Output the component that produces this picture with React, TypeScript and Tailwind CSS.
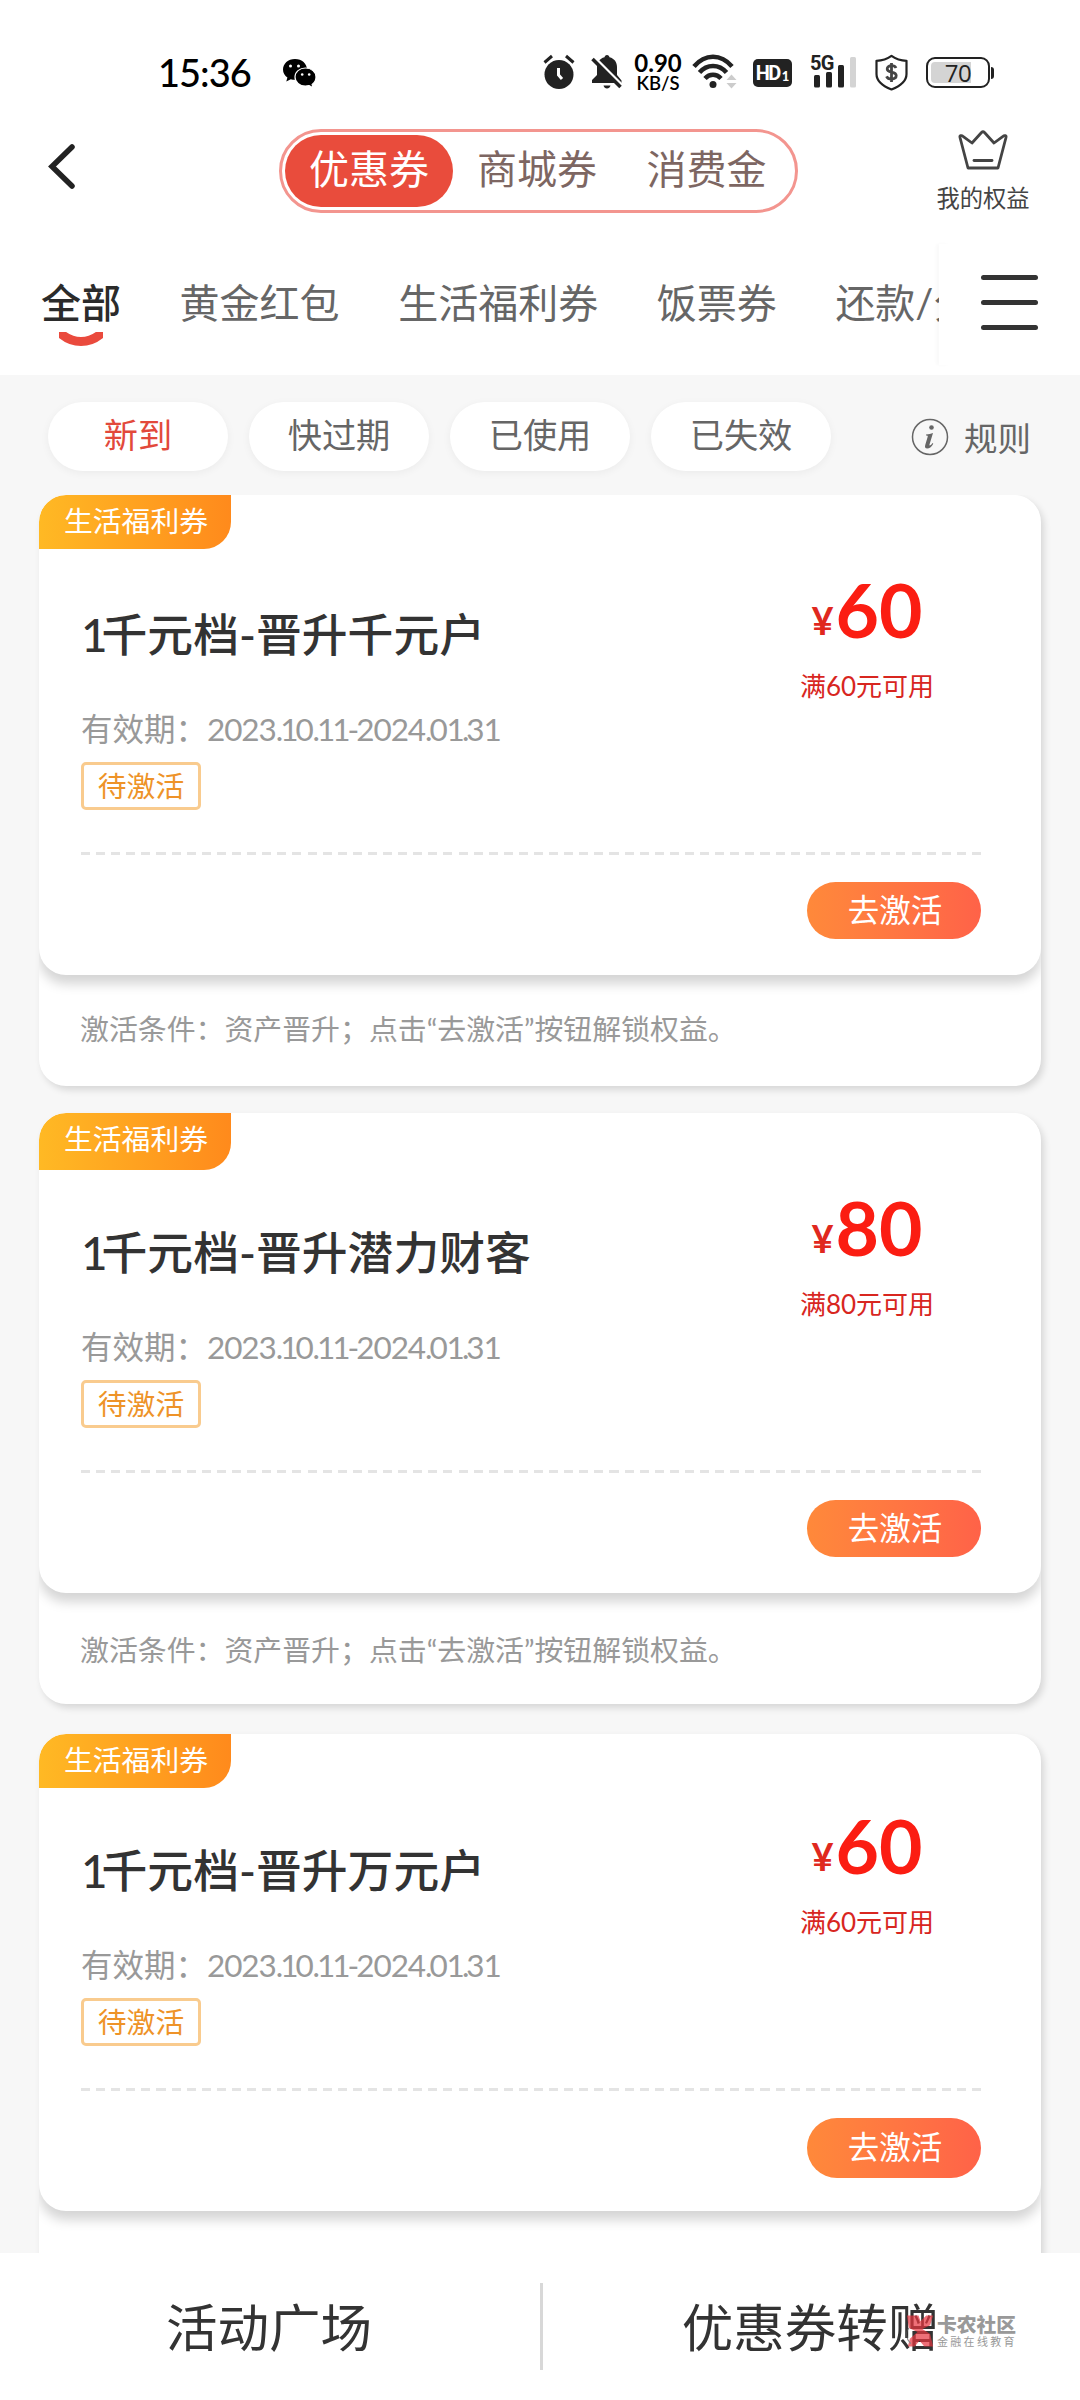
import React, { useState } from 'react';

interface Coupon {
  id: number;
  title: string;
  amount: number;
  margin: string;
  height: string;
  top: string;
  badge: string;
  button: string;
  note: string;
}

const COUPONS: Coupon[] = [
  { id: 1, title: '千元档-晋升千元户', amount: 60, margin: '', height: 'h-[480px]', top: 'h-[57px]', badge: 'h-[54px]', button: 'h-[57px]', note: 'pb-[4px]' },
  { id: 2, title: '千元档-晋升潜力财客', amount: 80, margin: '', height: 'h-[480px]', top: 'h-[57px]', badge: 'h-[57px]', button: 'h-[57px]', note: 'pt-[3px]' },
  { id: 3, title: '千元档-晋升万元户', amount: 60, margin: 'mt-[3px]', height: 'h-[477px]', top: 'h-[54px]', badge: 'h-[54px]', button: 'h-[60px]', note: 'pt-[6px]' },
];

const SEGMENTS = ['优惠券', '商城券', '消费金'];
const CATEGORIES = ['全部', '黄金红包', '生活福利券', '饭票券', '还款/分期券'];
const FILTERS = ['新到', '快过期', '已使用', '已失效'];

function StatusBar() {
  return (
    <div className="flex h-[108px] items-start pl-[158px] pt-[54px] text-black">
      <span className="mt-[-5px] w-[125px] text-[38px] font-medium leading-[46px] tracking-[-1px]">15:36</span>
      <svg className="mt-[5px] h-[29px] w-[33px]" viewBox="0 0 33 29">
        <path d="M12 0C5 0 0 4.700 0 10.500c0 3.300 1.700 6.200 4.400 8.100L3.300 22.500l4.500-2.300c1.300.4 2.700.6 4.200.6 7 0 12-4.600 12-10.300S19 0 12 0Z" fill="#000" />
        <path d="M22.500 9C16.500 9 12 13 12 18s4.500 9.100 10.500 9.100c1.300 0 2.500-.2 3.600-.5l4 2.200-1-3.400c2.400-1.700 3.900-4.400 3.900-7.400 0-5-4.500-9-10.500-9Z" fill="#000" stroke="#fff" strokeWidth="1.200" />
        <circle cx="7.500" cy="7" r="1.500" fill="#fff" />
        <circle cx="15.500" cy="7" r="1.500" fill="#fff" />
        <circle cx="19.200" cy="15.500" r="1.300" fill="#fff" />
        <circle cx="26.200" cy="15.500" r="1.300" fill="#fff" />
      </svg>

      {/* alarm */}
      <svg className="ml-[227px] h-[36px] w-[32px]" viewBox="0 0 32 36">
        <circle cx="16" cy="20.500" r="14.500" fill="#222" />
        <path d="M1.500 8.500 9 2M30.500 8.500 23 2" stroke="#222" strokeWidth="3" />
        <path d="M15.500 14v7l3.500 4" fill="none" stroke="#fff" strokeWidth="3" />
      </svg>
      {/* muted bell */}
      <svg className="ml-[16px] h-[36px] w-[32px]" viewBox="0 0 32 36">
        <path d="M16 1c1.500 0 2.300 1 2.500 2.300C23.500 4.500 26 8.500 26 13v8l4.500 5.500V29H1v-3l5-5v-8c0-4.500 2.500-8.500 7.500-9.700C13.700 2 14.500 1 16 1Z" fill="#222" />
        <path d="M12.500 31.500h7c-.5 2-1.800 3-3.500 3s-3-1-3.500-3Z" fill="#222" />
        <path d="m3 3 29 29" stroke="#fff" strokeWidth="3" />
        <path d="m1.500 5 28 28" stroke="#222" strokeWidth="3.500" />
      </svg>
      <div className="ml-[9px] mt-[-2px] flex w-[52px] flex-col items-center">
        <span className="text-[24px] font-bold leading-[22px]">0.90</span>
        <span className="text-[18.500px] font-semibold leading-[19px]">KB/S</span>
      </div>
      {/* wifi */}
      <svg className="ml-[8px] h-[36px] w-[46px]" viewBox="0 0 46 36">
        <g fill="none" stroke="#222" strokeWidth="4.500">
          <path d="M2 12.500C13-.5 29-.5 40 12.500" />
          <path d="M7.500 18.500c7.500-8.700 19.500-8.700 27 0" />
          <path d="M13 24.500c4.500-5 11.500-5 16 0" />
        </g>
        <circle cx="21" cy="30.500" r="3.500" fill="#222" />
        <path d="m39.500 20.500 5 5.500h-10ZM39.500 34.500l5-5.500h-10Z" fill="#ccc" />
      </svg>
      <div className="ml-[15px] mt-[5px] flex h-[28px] w-[39px] items-center justify-center rounded-[5px] bg-[#222] text-white">
        <span className="font-[Roboto] text-[20px] font-bold leading-none tracking-[-1.500px]">HD</span>
        <span className="ml-[2px] mt-[7px] text-[13px] font-black leading-none">1</span>
      </div>
      <div className="relative ml-[18px] h-[36px] w-[48px]">
        <svg className="h-full w-full" viewBox="0 0 48 36">
          <g fill="#222">
            <rect x="4" y="21" width="6" height="12.500" rx="1.500" />
            <rect x="16" y="18" width="6" height="15.500" rx="1.500" />
            <rect x="28" y="11" width="6" height="22.500" rx="1.500" />
          </g>
          <rect x="40" y="3" width="6" height="30.500" rx="1.500" fill="#d4d4d4" />
        </svg>
        <span className="absolute left-0 top-0 font-[Roboto] text-[20px] font-bold leading-[18px] tracking-[-0.800px] text-[#222]">5G</span>
      </div>
      {/* shield */}
      <svg className="ml-[16px] h-[37px] w-[35px]" viewBox="0 0 35 37">
        <path d="M17.500 1.800c4 2.800 9 4.700 15 5V20c0 7-6 12-15 15.500C8.500 32 2.500 27 2.500 20V6.800c6-.3 11-2.200 15-5Z" fill="none" stroke="#222" strokeWidth="2.200" strokeLinejoin="round" />
        <path d="M22 14c-.8-1.700-2.300-2.300-4.500-2.300-2.500 0-4.300 1.200-4.300 3.200 0 4.500 9 1.900 9 6.700 0 2.300-2 3.400-4.700 3.400-2.400 0-4.200-1-5-2.700M17.500 9v19" fill="none" stroke="#444" strokeWidth="2.800" />
      </svg>
      <div className="ml-[17px] mt-[3px] flex items-center">
        <div className="flex h-[31px] w-[64px] items-center justify-center rounded-[9px] border-2 border-[#222] bg-[linear-gradient(90deg,#d4d4d4_72%,#fff_72%)] bg-clip-content p-[3px] font-[Open_Sans] text-[24px] leading-none tracking-[-0.500px] text-[#222]">
          70
        </div>
        <div className="ml-px h-[12px] w-[3px] rounded-r-sm bg-[#222]" />
      </div>
    </div>
  );
}

function CouponCard({ coupon }: { coupon: Coupon }) {
  return (
    <div className={`shrink-0 overflow-hidden rounded-[27px] bg-white shadow-[3px_4px_7px_rgba(0,0,0,0.13)] ${coupon.margin}`}>
      <div className={`flex flex-col items-start rounded-[27px] bg-white shadow-[0_9px_12px_rgba(0,0,0,0.17)] ${coupon.height}`}>
        <div className={coupon.top}>
          <div className={`w-[192px] rounded-br-[27px] rounded-tl-[27px] bg-linear-to-r from-[#ffb924] to-[#ff8a1c] pl-[25px] text-[28.800px] leading-[53px] text-white ${coupon.badge}`}>
            生活福利券
          </div>
        </div>
        <div className="flex h-[300px] w-full justify-between pl-[42px]">
          <div className="flex flex-col items-start">
            <h3 className="mt-[53px] text-[45.800px] font-medium leading-[60px] text-[#333]">
              <span className="tracking-[-6px]">1</span>
              {coupon.title}
            </h3>
            <p className="mt-[43px] text-[31.500px] leading-[42px] text-[#999]">
              有效期：
              {'2023.10.11-2024.01.31'.split('').map((ch, i) => (
                <span key={i} className={'1.-'.includes(ch) ? 'tracking-[-3px]' : 'tracking-[-1.100px]'}>{ch}</span>
              ))}
            </p>
            <span className="mt-[12px] flex h-[48px] w-[120px] items-center justify-center rounded-[5px] border-[3px] border-[#f9cb8e] text-[28.800px] leading-[40px] text-[#ee9328]">
              待激活
            </span>
          </div>
          <div className="mr-[75px] flex w-[198px] flex-col items-center text-[#d8261f]">
            <div className="mt-[12px] flex items-baseline leading-[90px] text-[#fb1d12]">
              <span className="mr-[2px] -translate-y-[3px] text-[38px] font-bold text-[#e0281e]">¥</span>
              <span className="text-[75px] font-bold">{coupon.amount}</span>
            </div>
            <p className="text-[26px] leading-[36px]">满{coupon.amount}元可用</p>
          </div>
        </div>
        <div className="ml-[42px] h-[3px] w-[900px] bg-[repeating-linear-gradient(90deg,#e4e4e4_0_9px,transparent_9px_15.100px)]" />
        <button className={`ml-[768px] mt-[27px] w-[174px] rounded-full bg-linear-to-r from-[#ff893a] to-[#ff6248] pl-[2px] text-[31.500px] leading-none text-white ${coupon.button}`}>
          去激活
        </button>
      </div>
      <p className={`flex h-[111px] items-center pl-[41px] text-[28.900px] text-[#999] ${coupon.note}`}>
        激活条件：资产晋升；点击“去激活”按钮解锁权益。
      </p>
    </div>
  );
}

export default function App() {
  const [segment, setSegment] = useState(0);
  const [category, setCategory] = useState(0);
  const [filter, setFilter] = useState(0);

  return (
    <div className="flex h-[2400px] w-[1080px] flex-col overflow-hidden bg-[#f7f7f7] font-['Lato','Noto_Sans_CJK_SC',sans-serif]">
      <header className="h-[375px] shrink-0 bg-white">
        <StatusBar />

        {/* Nav */}
        <div className="flex h-[126px] items-start">
          <svg className="ml-[46px] mt-[34px] h-[50px] w-[32px]" viewBox="0 0 32 50">
            <path d="M26 5 6 24.500 26 44" fill="none" stroke="#222" strokeWidth="5.500" strokeLinecap="round" />
          </svg>
          <div className="ml-[201px] mt-[21px] grid h-[84px] w-[519px] grid-cols-[168px_168px_1fr] rounded-full border-[3px] border-[#f3958f] p-[3px]">
            {SEGMENTS.map((name, i) => (
              <button
                key={name}
                onClick={() => setSegment(i)}
                className={`rounded-full pb-[4px] text-[40px] leading-none ${segment === i ? 'bg-[#e94c3c] text-white' : 'text-[#7d6662]'}`}
              >
                {name}
              </button>
            ))}
          </div>
          <div className="ml-[129px] mt-[21px] flex w-[112px] flex-col items-center text-[#444]">
            <svg className="h-[42px] w-[52px]" viewBox="0 0 52 42">
              <path d="M11 39h30l8-30.500c.5-2-1.500-2.500-3-1.200L37 14 27.500 3.500c-1-1-2-1-3 0L15 14 6 7.300C4.500 6 2.500 6.500 3 8.500Z" fill="none" stroke="#444" strokeWidth="2.800" strokeLinejoin="round" />
              <path d="M17 31.500h18" stroke="#444" strokeWidth="2.800" strokeLinecap="round" />
            </svg>
            <span className="mt-[12px] text-[23.300px] leading-[30px]">我的权益</span>
          </div>
        </div>

        {/* Categories */}
        <div className="flex h-[141px]">
          <div className="flex w-[939px] gap-[58.600px] overflow-hidden whitespace-nowrap pl-[41px] pt-[41px] text-[40px] leading-[56px] text-[#666]">
            {CATEGORIES.map((name, i) => (
              <div key={name} onClick={() => setCategory(i)} className="flex flex-col items-center">
                <span className={category === i ? 'font-medium text-[#2b2b2b]' : ''}>{name}</span>
                {category === i && (
                  <svg className="mt-px h-[16px] w-[44px]" viewBox="0 0 44 16">
                    <path d="M-1-1c14 14 32 14 46 0" fill="none" stroke="#ea4a3d" strokeWidth="9" />
                  </svg>
                )}
              </div>
            ))}
          </div>
          <div className="my-[10px] w-[12px] shadow-[-3px_0_3px_rgba(0,0,0,0.025)]" />
          <div className="ml-[30px] mt-[41px] flex w-[57px] flex-col gap-[20px]">
            <span className="h-[5px] rounded-full bg-[#333]" />
            <span className="h-[5px] rounded-full bg-[#333]" />
            <span className="h-[5px] rounded-full bg-[#333]" />
          </div>
        </div>
      </header>

      {/* Filters */}
      <div className="flex h-[120px] shrink-0 items-start gap-[21px] pl-[48px] pt-[27px] text-[#666]">
        {FILTERS.map((name, i) => (
          <button
            key={name}
            onClick={() => setFilter(i)}
            className={`h-[69px] w-[180px] rounded-full bg-white pb-[3px] text-[34.200px] leading-none shadow-[0_2px_8px_rgba(0,0,0,0.05)] ${filter === i ? 'text-[#e2493b]' : ''}`}
          >
            {name}
          </button>
        ))}
        <div className="ml-[59px] mt-[15px] flex items-center">
          <svg className="h-[38px] w-[38px]" viewBox="0 0 38 38">
            <circle cx="19" cy="19" r="17.500" fill="none" stroke="#666" strokeWidth="1.500" />
            <circle cx="20.500" cy="9.500" r="2.300" fill="#666" />
            <path d="M15 16.500c3-.2 4.800-.8 7-1.500l-3.500 11.500c-.4 1.500.8 1.500 3-1.500l.8.700c-2 3.500-4 4.800-6 4.800-2.300 0-2.700-1.600-2-3.800l2.400-8c.3-1-.2-1.300-1.700-1.300Z" fill="#666" />
          </svg>
          <span className="ml-[15px] mt-[2px] text-[33.500px] leading-[38px]">规则</span>
        </div>
      </div>

      <main className="flex min-h-0 flex-1 flex-col gap-[27px] overflow-hidden px-[39px]">
        {COUPONS.map((coupon) => (
          <CouponCard key={coupon.id} coupon={coupon} />
        ))}
      </main>

      <footer className="relative flex h-[147px] shrink-0 bg-white text-[51.500px] leading-[72px] text-[#333]">
        <div className="w-[540px] pr-[2px] pt-[38px] text-center">活动广场</div>
        <div className="mt-[30px] h-[87px] w-[3px] bg-[#d8d8d8]" />
        <div className="flex-1 pr-[2px] pt-[38px] text-center">优惠券转赠</div>
        <div className="absolute left-[904px] top-[60px] flex items-center">
          <svg className="h-[36px] w-[31px] opacity-70" viewBox="0 0 32 36">
            <path d="M3 2h12l2 6 6-6h7l-3 10-8 4 8 5 3 13h-9l-5-6-5 6H4l2-8 8-7-9-4Z" fill="#e8353f" />
            <path d="M5 15c-4 4-3 11 2 16" fill="none" stroke="#555" strokeWidth="1.200" />
          </svg>
          <div className="ml-[2px] flex flex-col text-[#999]">
            <span className="text-[19.800px] font-black leading-[21px]">卡农社区</span>
            <span className="text-[11px] leading-[14px] tracking-[2.300px]">金融在线教育</span>
          </div>
        </div>
      </footer>
    </div>
  );
}
